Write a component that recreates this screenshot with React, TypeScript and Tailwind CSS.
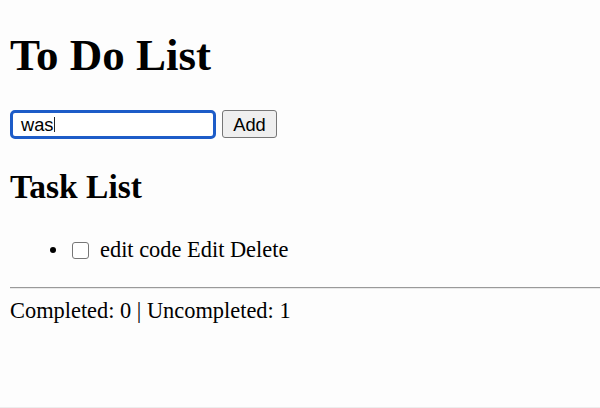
export default function App() {
  return (
    <div className="w-[600px] h-[408px] overflow-hidden bg-[#fdfdfd] border-b border-[#ededed] pl-[10px] pt-[31px] text-black font-['Liberation_Serif','Times_New_Roman',serif]">
      <h1 className="text-[45px] leading-[48px] font-bold">To Do List</h1>

      <div className="mt-[31px] flex items-start gap-[6px]">
        <div className="w-[206px] h-[29px] border-[3px] border-[#1d5cc8] rounded-[5px] bg-white flex items-center pl-[8px] font-['Liberation_Sans',Arial,sans-serif] text-[18.3px] leading-[21px]">
          <span>was</span>
          <span className="w-px h-[15px] bg-[#222]"></span>
        </div>
        <button className="w-[55px] h-[28px] border border-[#767676] rounded-[3px] bg-[#efefef] flex items-center justify-center font-['Liberation_Sans',Arial,sans-serif] text-[18.3px] leading-[21px] text-black">
          Add
        </button>
      </div>

      <h2 className="mt-[30px] text-[33.5px] leading-[36px] font-bold">Task List</h2>

      <ul className="mt-[33px]">
        <li className="flex items-center h-[24px] text-[22.4px] leading-[24px]">
          <span className="ml-[40px] w-[6px] h-[6px] rounded-full bg-black"></span>
          <input
            type="checkbox"
            className="appearance-none ml-[16px] w-[17px] h-[17px] border border-[#767676] rounded-[3px] bg-white"
          />
          <span className="ml-[11px]">edit code Edit Delete</span>
        </li>
      </ul>

      <div className="mt-[25px] -mr-[10px] h-[2px] border-t border-[#9a9a9a] bg-[#e9e9e9]"></div>

      <p className="mt-[10px] text-[22.4px] leading-[24px]">Completed: 0 | Uncompleted: 1</p>
    </div>
  );
}
